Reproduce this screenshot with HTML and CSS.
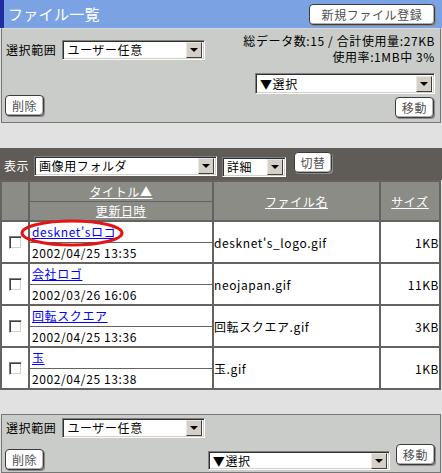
FILE: index.html
```html
<!DOCTYPE html>
<html lang="ja">
<head>
<meta charset="utf-8">
<title>ファイル一覧</title>
<link rel="stylesheet" href="styles.css">
</head>
<body>
<div class="page">
  <div class="header">
    <div class="title">ファイル一覧</div>
    <button class="btn btn-new">新規ファイル登録</button>
  </div>

  <div class="panel panel-top">
    <div class="row-a">
      <div class="range">
        <span class="label">選択範囲</span>
        <div class="select sel-range"><span class="val">ユーザー任意</span><span class="arrow"></span></div>
      </div>
      <div class="stats">
        <div class="stat-line">総データ数:15 / 合計使用量:27KB</div>
        <div class="stat-line">使用率:1MB中 3%</div>
      </div>
    </div>
    <div class="row-b">
      <div class="select sel-move"><span class="val">▼選択</span><span class="arrow"></span></div>
    </div>
    <div class="row-c">
      <button class="btn">削除</button>
      <button class="btn btn-move">移動</button>
    </div>
  </div>

  <div class="list">
    <div class="toolbar">
      <span class="tb-label">表示</span>
      <div class="select sel-folder"><span class="val">画像用フォルダ</span><span class="arrow"></span></div>
      <div class="select sel-view"><span class="val">詳細</span><span class="arrow"></span></div>
      <button class="btn btn-switch">切替</button>
    </div>
    <table class="files">
      <colgroup>
        <col class="c-chk"><col class="c-title"><col class="c-name"><col class="c-size">
      </colgroup>
      <thead>
        <tr>
          <th class="h-chk"></th>
          <th class="h-title"><div class="h-sub h-top"><a>タイトル▲</a></div><div class="h-sub"><a>更新日時</a></div></th>
          <th><a>ファイル名</a></th>
          <th><a>サイズ</a></th>
        </tr>
      </thead>
      <tbody>
        <tr>
          <td class="chk"><span class="cb"></span></td>
          <td class="tcell">
            <div class="link"><a>desknet'sロゴ</a></div><div class="date">2002/04/25 13:35</div>
            <svg class="mark" width="104" height="28" viewBox="0 0 104 28"><ellipse cx="52" cy="14" rx="50" ry="12" fill="none" stroke="#e41414" stroke-width="3"/></svg>
          </td>
          <td class="fname">desknet's_logo.gif</td>
          <td class="size">1KB</td>
        </tr>
        <tr>
          <td class="chk"><span class="cb"></span></td>
          <td class="tcell"><div class="link"><a>会社ロゴ</a></div><div class="date">2002/03/26 16:06</div></td>
          <td class="fname">neojapan.gif</td>
          <td class="size">11KB</td>
        </tr>
        <tr>
          <td class="chk"><span class="cb"></span></td>
          <td class="tcell"><div class="link"><a>回転スクエア</a></div><div class="date">2002/04/25 13:36</div></td>
          <td class="fname">回転スクエア.gif</td>
          <td class="size">3KB</td>
        </tr>
        <tr>
          <td class="chk"><span class="cb"></span></td>
          <td class="tcell"><div class="link"><a>玉</a></div><div class="date">2002/04/25 13:38</div></td>
          <td class="fname">玉.gif</td>
          <td class="size">1KB</td>
        </tr>
      </tbody>
    </table>
  </div>

  <div class="panel panel-bottom">
    <div class="range">
      <span class="label">選択範囲</span>
      <div class="select sel-range"><span class="val">ユーザー任意</span><span class="arrow"></span></div>
    </div>
    <div class="row-d">
      <button class="btn btn-del2">削除</button>
      <div class="right-group">
        <div class="select sel-move2"><span class="val">▼選択</span><span class="arrow"></span></div>
        <button class="btn">移動</button>
      </div>
    </div>
  </div>
</div>
</body>
</html>
```
FILE: styles.css
```css
* { box-sizing: border-box; }

body {
  margin: 0;
  background: #e1e1e1;
  font-family: "Noto Sans CJK JP", "DejaVu Sans", sans-serif;
  font-size: 12px;
  letter-spacing: 0.6px;
  color: #000;
}

.page { width: 442px; }

/* header */
.header {
  height: 28px;
  background: #7ba3e4;
  border-left: 4px solid #1f2ea3;
  display: flex;
  justify-content: space-between;
  align-items: flex-start;
  padding: 0 7px 0 4px;
}
.title {
  color: #fff;
  font-size: 15px;
  line-height: 28px;
  letter-spacing: 0.3px;
}

/* buttons */
.btn {
  font-family: inherit;
  font-size: 12px;
  letter-spacing: 0.6px;
  color: #505050;
  background: #fff;
  border: 1px solid #3c3c3c;
  border-radius: 4px;
  height: 21px;
  padding: 0 6px;
  line-height: 18px;
  box-shadow: inset -1px -1px 0 #b0b0b0, 1px 1px 0 #8a8a8a;
  cursor: pointer;
}
.btn-new { margin-top: 4px; width: 126px; padding: 0; }

/* select */
.select {
  display: flex;
  align-items: center;
  height: 20px;
  background: #fff;
  border: 1px solid;
  border-color: #808080 #ffffff #ffffff #808080;
  box-shadow: inset 1px 1px 0 #303030, inset -1px -1px 0 #d4d0c8;
  padding: 1px 2px 1px 2px;
}
.select .val {
  flex: 1;
  padding-left: 2px;
  line-height: 16px;
  white-space: nowrap;
}
.arrow {
  width: 16px;
  height: 16px;
  background: #d4d0c8;
  border: 1px solid;
  border-color: #e8e8e0 #404040 #404040 #e8e8e0;
  display: flex;
  align-items: center;
  justify-content: center;
}
.arrow::after {
  content: "";
  width: 0; height: 0;
  border-left: 4px solid transparent;
  border-right: 4px solid transparent;
  border-top: 4px solid #000;
}

/* panels */
.panel {
  margin: 0 1px;
  background: #c9ccc8;
  border: 1px solid #767676;
}
.panel-top {
  border-top: 1px solid #d8d8d8;
  padding: 4px 5px 3px 4px;
}
.row-a {
  display: flex;
  justify-content: space-between;
  align-items: flex-start;
  height: 30px;
}
.range {
  display: flex;
  align-items: center;
  gap: 6px;
}
.row-a .range { margin-top: 7px; }
.label { line-height: 20px; }
.sel-range { width: 143px; }
.stats {
  text-align: right;
  display: flex;
  flex-direction: column;
  gap: 1px;
}
.stat-line { line-height: 15px; height: 15px; }
.row-b {
  display: flex;
  justify-content: flex-end;
  margin-top: 10px;
}
.sel-move { width: 180px; height: 21px; }
.row-c {
  display: flex;
  justify-content: space-between;
  align-items: flex-start;
  margin-top: 1px;
  height: 24px;
}
.row-c .btn:first-child { margin-left: -1px; }
.btn-move { margin-top: 2px; margin-right: 1px; }

/* list */
.list { margin-top: 25px; }
.toolbar {
  height: 32px;
  background: #5f5b57;
  display: flex;
  align-items: flex-start;
  padding: 4px 0 0 4px;
}
.tb-label {
  color: #fff;
  line-height: 20px;
  margin-top: 4px;
  width: 30px;
}
.sel-folder { width: 183px; margin-top: 4px; }
.sel-view { width: 64px; margin-top: 5px; margin-left: 5px; }
.btn-switch { margin-left: 8px; width: 38px; padding: 0; }

.files {
  width: 441px;
  border-collapse: separate;
  border-spacing: 2px;
  background: #65635f;
  table-layout: fixed;
}
.c-chk { width: 26px; }
.c-title { width: 182px; }
.c-name { width: 165px; }
.c-size { width: 58px; }

.files th {
  background: #8c8c87;
  padding: 0;
  font-weight: normal;
  height: 38px;
  vertical-align: middle;
  text-align: center;
}
.files th a {
  color: #fff;
  text-decoration: underline;
}
.files th.h-title { vertical-align: top; }
.h-sub { height: 18px; line-height: 18px; }
.h-top { height: 20px; line-height: 19px; border-bottom: 1px solid #65635f; }

.files td {
  background: #fff;
  padding: 0;
  height: 40px;
  vertical-align: middle;
}
.chk { text-align: center; }
.cb {
  display: inline-block;
  width: 13px;
  height: 13px;
  margin-top: 3px;
  margin-left: 1px;
  border: 1px solid;
  border-color: #808080 #ffffff #ffffff #808080;
  box-shadow: inset 1px 1px 0 #404040, inset -1px -1px 0 #d4d0c8;
  background: #fff;
}
.tcell { position: relative; vertical-align: top; }
.link {
  height: 21px;
  line-height: 20px;
  padding-left: 2px;
  border-bottom: 1px solid #65635f;
}
.link a { color: #0000ff; text-decoration: underline; }
.date {
  height: 19px;
  line-height: 19px;
  padding-left: 2px;
}
.mark {
  position: absolute;
  left: -10px;
  top: -3px;
  pointer-events: none;
}
.fname { padding-left: 1px; white-space: nowrap; }
.size { text-align: right; padding-right: 3px; }

/* bottom panel */
.panel-bottom {
  margin-top: 24px;
  padding: 3px 5px 2px 4px;
}
.row-d {
  display: flex;
  justify-content: space-between;
  align-items: flex-start;
  margin-top: 6px;
}
.btn-del2 { margin-top: 5px; margin-left: -1px; }
.right-group {
  display: flex;
  align-items: flex-start;
  gap: 6px;
}
.sel-move2 { width: 182px; margin-top: 7px; height: 19px; }
```
